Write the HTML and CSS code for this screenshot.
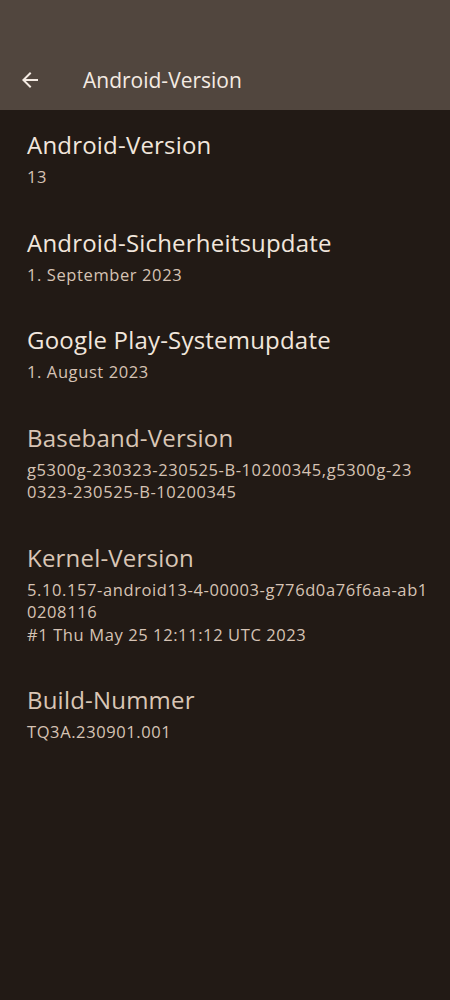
FILE: index.html
```html
<!DOCTYPE html>
<html lang="de">
<head>
    <meta charset="UTF-8">
    <meta name="viewport" content="width=device-width, initial-scale=1.0">
    <title>Android-Version</title>
    <link rel="stylesheet" href="styles.css">
</head>
<body>
    <div class="appbar">
        <div class="toolbar">
            <svg class="back" width="24" height="24" viewBox="0 0 24 24">
                <path d="M20 11H7.83l5.59-5.59L12 4l-8 8 8 8 1.41-1.41L7.83 13H20v-2z" fill="#f4ebe3"/>
            </svg>
            <h1 class="toolbar-title">Android-Version</h1>
        </div>
    </div>

    <div class="list">
        <div class="item">
            <div class="item-title">Android-Version</div>
            <div class="item-summary">13</div>
        </div>
        <div class="item">
            <div class="item-title">Android-Sicherheitsupdate</div>
            <div class="item-summary">1. September 2023</div>
        </div>
        <div class="item">
            <div class="item-title">Google Play-Systemupdate</div>
            <div class="item-summary">1. August 2023</div>
        </div>
        <div class="item dim">
            <div class="item-title">Baseband-Version</div>
            <div class="item-summary">g5300g-230323-230525-B-10200345,g5300g-23<br>0323-230525-B-10200345</div>
        </div>
        <div class="item dim">
            <div class="item-title">Kernel-Version</div>
            <div class="item-summary">5.10.157-android13-4-00003-g776d0a76f6aa-ab1<br>0208116<br>#1 Thu May 25 12:11:12 UTC 2023</div>
        </div>
        <div class="item dim">
            <div class="item-title">Build-Nummer</div>
            <div class="item-summary">TQ3A.230901.001</div>
        </div>
    </div>
</body>
</html>
```

FILE: styles.css
```css
body {
    margin: 0;
    background-color: #221a15;
    font-family: "Open Sans", Roboto, sans-serif;
    color: #f1e6dc;
    min-height: 1000px;
}
.appbar {
    background-color: #51463e;
    height: 110px;
    display: flex;
    align-items: flex-end;
}
.toolbar {
    height: 60px;
    display: flex;
    align-items: center;
    padding-left: 18px;
    width: 100%;
}
.back {
    width: 24px;
    height: 24px;
}
.toolbar-title {
    margin: 0 0 0 41px;
    font-size: 21px;
    font-weight: 400;
    color: #f4ebe3;
}
.list {
    padding-top: 1px;
}
.item {
    padding: 19px 27px 20px;
}
.item-title {
    font-size: 24px;
    line-height: 30px;
    letter-spacing: 0.2px;
    color: #f1e6dc;
}
.item-summary {
    margin-top: 6px;
    font-size: 16.5px;
    line-height: 22.5px;
    letter-spacing: 0.6px;
    white-space: nowrap;
    color: #d6c3b4;
}
.item.dim .item-title {
    color: #d9c6b6;
}
```
